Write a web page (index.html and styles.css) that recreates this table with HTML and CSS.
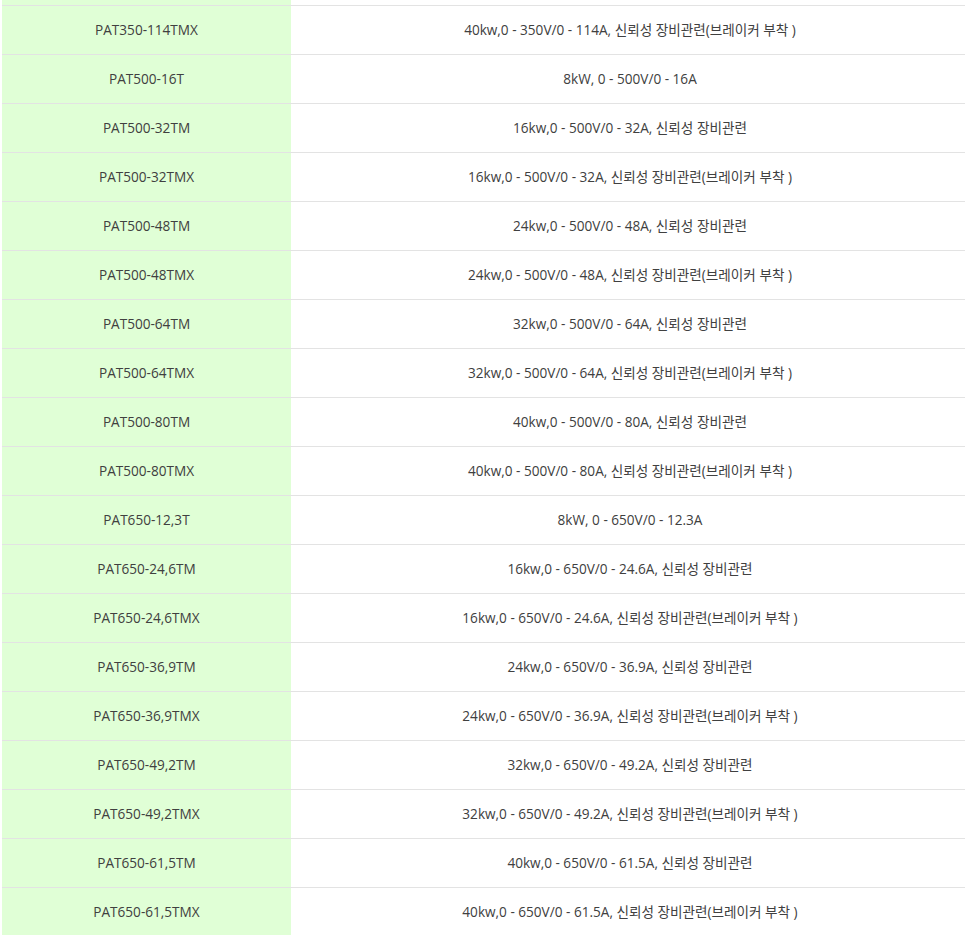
FILE: index.html
```html
<!DOCTYPE html>
<html lang="ko">
<head>
<meta charset="utf-8">
<title>PAT 제품 목록</title>
<link rel="stylesheet" href="styles.css">
</head>
<body>
<table class="spec">
<tbody>
<tr class="spacer"><td class="model"></td><td class="desc"></td></tr>
<tr><td class="model">PAT350-114TMX</td><td class="desc">40kw,0 - 350V/0 - 114A, 신뢰성 장비관련(브레이커 부착 )</td></tr>
<tr><td class="model">PAT500-16T</td><td class="desc">8kW, 0 - 500V/0 - 16A</td></tr>
<tr><td class="model">PAT500-32TM</td><td class="desc">16kw,0 - 500V/0 - 32A, 신뢰성 장비관련</td></tr>
<tr><td class="model">PAT500-32TMX</td><td class="desc">16kw,0 - 500V/0 - 32A, 신뢰성 장비관련(브레이커 부착 )</td></tr>
<tr><td class="model">PAT500-48TM</td><td class="desc">24kw,0 - 500V/0 - 48A, 신뢰성 장비관련</td></tr>
<tr><td class="model">PAT500-48TMX</td><td class="desc">24kw,0 - 500V/0 - 48A, 신뢰성 장비관련(브레이커 부착 )</td></tr>
<tr><td class="model">PAT500-64TM</td><td class="desc">32kw,0 - 500V/0 - 64A, 신뢰성 장비관련</td></tr>
<tr><td class="model">PAT500-64TMX</td><td class="desc">32kw,0 - 500V/0 - 64A, 신뢰성 장비관련(브레이커 부착 )</td></tr>
<tr><td class="model">PAT500-80TM</td><td class="desc">40kw,0 - 500V/0 - 80A, 신뢰성 장비관련</td></tr>
<tr><td class="model">PAT500-80TMX</td><td class="desc">40kw,0 - 500V/0 - 80A, 신뢰성 장비관련(브레이커 부착 )</td></tr>
<tr><td class="model">PAT650-12,3T</td><td class="desc">8kW, 0 - 650V/0 - 12.3A</td></tr>
<tr><td class="model">PAT650-24,6TM</td><td class="desc">16kw,0 - 650V/0 - 24.6A, 신뢰성 장비관련</td></tr>
<tr><td class="model">PAT650-24,6TMX</td><td class="desc">16kw,0 - 650V/0 - 24.6A, 신뢰성 장비관련(브레이커 부착 )</td></tr>
<tr><td class="model">PAT650-36,9TM</td><td class="desc">24kw,0 - 650V/0 - 36.9A, 신뢰성 장비관련</td></tr>
<tr><td class="model">PAT650-36,9TMX</td><td class="desc">24kw,0 - 650V/0 - 36.9A, 신뢰성 장비관련(브레이커 부착 )</td></tr>
<tr><td class="model">PAT650-49,2TM</td><td class="desc">32kw,0 - 650V/0 - 49.2A, 신뢰성 장비관련</td></tr>
<tr><td class="model">PAT650-49,2TMX</td><td class="desc">32kw,0 - 650V/0 - 49.2A, 신뢰성 장비관련(브레이커 부착 )</td></tr>
<tr><td class="model">PAT650-61,5TM</td><td class="desc">40kw,0 - 650V/0 - 61.5A, 신뢰성 장비관련</td></tr>
<tr><td class="model">PAT650-61,5TMX</td><td class="desc">40kw,0 - 650V/0 - 61.5A, 신뢰성 장비관련(브레이커 부착 )</td></tr>
</tbody>
</table>
</body>
</html>
```

FILE: styles.css
```css
html, body {
  margin: 0;
  padding: 0;
  background: #ffffff;
  overflow: hidden;
}
body {
  padding-left: 2px;
  font-family: "Open Sans", "Noto Sans CJK KR", sans-serif;
  font-size: 13.6px;
  color: #404040;
}
.spec {
  width: 967px;
  border-collapse: collapse;
}
.spec td {
  box-sizing: border-box;
  height: 49px;
  padding: 1px 0 0 0;
  text-align: center;
  vertical-align: middle;
  border-bottom: 1px solid #e3e3e3;
  line-height: 20px;
}
.spec .spacer td {
  height: 5px;
  padding: 0;
  line-height: 4px;
}
.spec tr:last-child td {
  border-bottom: none;
}
.spec .model {
  width: 289px;
  background: #e0ffd6;
}
```
